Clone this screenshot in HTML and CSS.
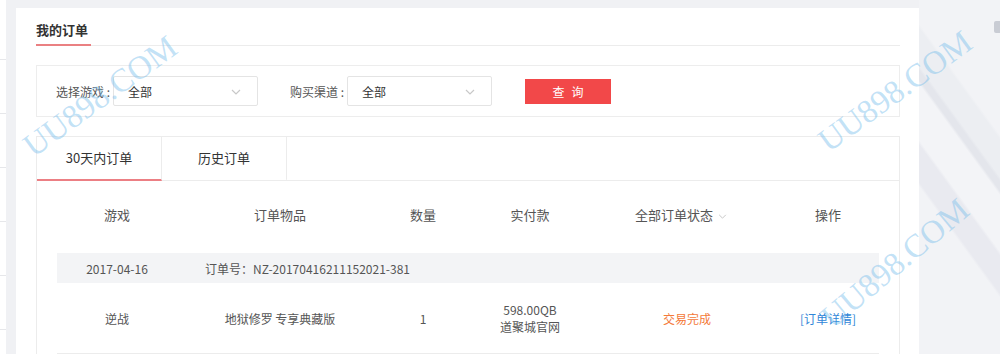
FILE: index.html
```html
<!DOCTYPE html>
<html lang="zh-CN">
  <head>
    <meta charset="UTF-8" />
    <title>我的订单</title>
    <link rel="stylesheet" href="styles.css">
  </head>
  <body>
    <div class="page">
      <div class="side">
        <div class="side-item first"></div>
        <div class="side-item"></div>
        <div class="side-item"></div>
        <div class="side-item"></div>
        <div class="side-item"></div>
        <div class="side-item"></div>
      </div>

      <div class="card">
        <div class="card-title"><span>我的订单</span></div>

        <div class="filter">
          <label>选择游戏 :</label>
          <div class="select">
            全部
            <svg class="chev" width="10" height="6" viewBox="0 0 10 6"><path d="M1 1l4 4 4-4" fill="none" stroke="#c8c8c8" stroke-width="1.2"/></svg>
          </div>
          <label class="second">购买渠道 :</label>
          <div class="select">
            全部
            <svg class="chev" width="10" height="6" viewBox="0 0 10 6"><path d="M1 1l4 4 4-4" fill="none" stroke="#c8c8c8" stroke-width="1.2"/></svg>
          </div>
          <button class="search-btn">查询</button>
        </div>

        <div class="orders">
          <div class="tabs">
            <div class="tab active">30天内订单</div>
            <div class="tab">历史订单</div>
          </div>

          <div class="table-wrap">
            <table class="order-table">
              <colgroup>
                <col style="width:120px" />
                <col style="width:206px" />
                <col style="width:80px" />
                <col style="width:134px" />
                <col style="width:180px" />
                <col />
              </colgroup>
              <thead>
                <tr>
                  <th>游戏</th>
                  <th>订单物品</th>
                  <th>数量</th>
                  <th>实付款</th>
                  <th class="status-head">全部订单状态 <svg width="9" height="5" viewBox="0 0 10 6"><path d="M1 1l4 4 4-4" fill="none" stroke="#c8c8c8" stroke-width="1.2"/></svg></th>
                  <th>操作</th>
                </tr>
              </thead>
              <tbody>
                <tr class="order-head">
                  <td>2017-04-16</td>
                  <td colspan="5" class="order-no">订单号：NZ-20170416211152021-381</td>
                </tr>
                <tr class="order-row">
                  <td>逆战</td>
                  <td>地狱修罗 专享典藏版</td>
                  <td>1</td>
                  <td class="pay">598.00QB<br />道聚城官网</td>
                  <td class="done">交易完成</td>
                  <td><a class="detail" href="#">[订单详情]</a></td>
                </tr>
              </tbody>
            </table>
          </div>
        </div>
      </div>

      <div class="right-bg">
        <div class="right-icon"></div>
      </div>
    </div>

    <div class="mark mark-1">UU898.COM</div>
    <div class="mark mark-2">UU898.COM</div>
    <div class="mark mark-3">UU898.COM</div>
  </body>
</html>
```

FILE: styles.css
```css
body {
  margin: 0;
  background-color: #f0f1f4;
  font-family: "Noto Sans CJK SC", "Noto Sans", sans-serif;
  font-size: 12px;
  color: #555;
  overflow: hidden;
}

.page {
  display: flex;
  height: 354px;
  overflow: hidden;
}

.side {
  width: 6px;
  background-color: #fff;
  flex-shrink: 0;
}

.side-item {
  height: 53px;
  border-bottom: 1px solid #e6e7ea;
}

.side-item.first {
  height: 59px;
}

.card {
  width: 903px;
  flex-shrink: 0;
  margin: 8px 0 0 10px;
  background-color: #fff;
  padding: 12px 19px 0 20px;
  box-sizing: border-box;
}

.card-title {
  display: flex;
  border-bottom: 1px solid #ececec;
}

.card-title span {
  font-size: 13px;
  font-weight: bold;
  color: #333;
  line-height: 20px;
  padding: 0 3px 4px 0;
  border-bottom: 2px solid #ea8082;
  margin-bottom: -1px;
}

.filter {
  display: flex;
  align-items: center;
  margin-top: 19px;
  padding: 10px 19px;
  border: 1px solid #ededed;
}

.filter label {
  color: #555;
  margin-right: 3px;
}

.filter label.second {
  margin-left: 32px;
}

.select {
  position: relative;
  width: 145px;
  height: 30px;
  line-height: 30px;
  box-sizing: border-box;
  border: 1px solid #e4e4e4;
  border-radius: 2px;
  padding-left: 14px;
  color: #333;
}

.select .chev {
  position: absolute;
  right: 16px;
  top: 12px;
}

.search-btn {
  margin-left: 33px;
  width: 86px;
  height: 25px;
  border: none;
  background-color: #f24849;
  color: #fff;
  font-family: "Noto Sans CJK SC", sans-serif;
  font-size: 12px;
  letter-spacing: 7px;
  text-indent: 7px;
  padding: 0;
}

.orders {
  margin-top: 19px;
  border: 1px solid #ececec;
  border-bottom: none;
}

.tabs {
  display: flex;
  border-bottom: 1px solid #ececec;
}

.tab {
  width: 124px;
  height: 42px;
  line-height: 42px;
  text-align: center;
  font-size: 13px;
  color: #333;
  border-right: 1px solid #ececec;
  margin-bottom: -1px;
  border-bottom: 2px solid transparent;
}

.tab.active {
  border-bottom-color: #ec7f84;
}

.table-wrap {
  padding: 0 20px;
}

.order-table {
  width: 100%;
  table-layout: fixed;
  border-collapse: collapse;
}

.order-table th {
  height: 67px;
  padding: 0 0 5px;
  font-size: 13px;
  font-weight: normal;
  color: #555;
  text-align: center;
}

.order-table th.status-head {
  padding-right: 12px;
}

.status-head svg {
  margin-left: 2px;
  vertical-align: middle;
}

.order-table td {
  text-align: center;
  color: #555;
  padding: 0;
}

.order-head td {
  height: 30px;
  background-color: #f3f4f6;
}

.order-head td.order-no {
  text-align: left;
  padding-left: 28px;
}

.order-row td {
  height: 70px;
  border-bottom: 1px solid #ececec;
}

.order-row td.pay {
  line-height: 17px;
}

.order-row td.done {
  color: #f47a3a;
}

.detail {
  color: #2f86d8;
  text-decoration: none;
}

.right-bg {
  flex: 1;
  position: relative;
  background: linear-gradient(54deg, #f2f3f6 0%, #f2f3f6 36%, #e9eaf0 37%, #e9eaf0 45%, #f3f4f7 46%, #f3f4f7 58%, #e4e6ec 59%, #e4e6ec 61%, #eceef2 62%, #eceef2 70%, #f2f3f6 71%);
}

.right-icon {
  position: absolute;
  left: 75px;
  top: 21px;
  width: 8px;
  height: 12px;
  border-radius: 2px;
  background-color: #c9ccd4;
}

.mark {
  position: absolute;
  font-family: "Liberation Serif", serif;
  font-size: 33px;
  color: rgba(120, 190, 235, 0.45);
  white-space: nowrap;
  transform-origin: center;
  pointer-events: none;
}

.mark-1 {
  left: 10px;
  top: 78px;
  transform: rotate(-36deg);
}

.mark-2 {
  left: 805px;
  top: 73px;
  transform: rotate(-36deg);
}

.mark-3 {
  left: 805px;
  top: 245px;
  transform: rotate(-40deg);
}
```
